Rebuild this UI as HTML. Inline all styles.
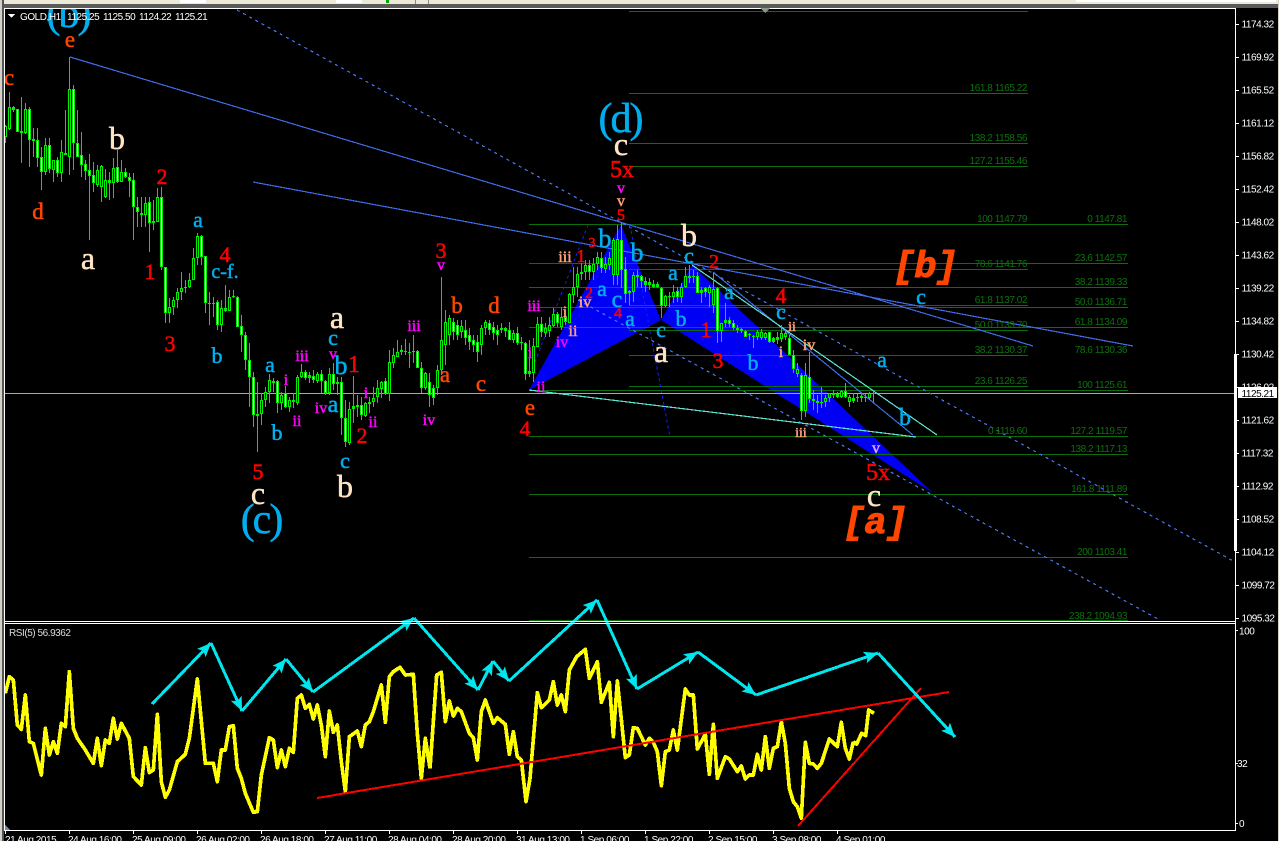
<!DOCTYPE html>
<html><head><meta charset="utf-8"><title>GOLD,H1</title>
<style>
html,body{margin:0;padding:0;background:#000;width:1279px;height:841px;overflow:hidden}
svg{display:block}
.ax{font:10px "Liberation Sans",sans-serif;letter-spacing:-.45px;fill:#fff}
.fb{font:10px "Liberation Sans",sans-serif;letter-spacing:-.45px;fill:#0c720c;text-anchor:end}
.w text{font-family:"Liberation Serif",serif;text-anchor:middle;stroke-width:.5px}
.big{fill:#00aeef;stroke:#00aeef;font-size:42px;letter-spacing:-2px}
.bq{fill:#ffe4c4;stroke:#ffe4c4;font-size:32px}
.rd{fill:#f00;stroke:#f00;font-size:22px}
.bl{fill:#00aeef;stroke:#00aeef;font-size:22px}
.or{fill:#ff4500;stroke:#ff4500;font-size:23px}
.mg{fill:#f0f;stroke:#f0f;font-size:16px}
.sl{fill:#ffa07a;stroke:#ffa07a;font-size:16px}
.br{font:italic bold 37px "Liberation Mono",monospace;fill:#ff4500;stroke:#ff4500;stroke-width:1px;letter-spacing:-1px;text-anchor:middle}
</style></head><body>
<svg xmlns="http://www.w3.org/2000/svg" width="1279" height="841" viewBox="0 0 1279 841">
<defs>
<marker id="ar" markerWidth="16" markerHeight="12" refX="14" refY="6" orient="auto" markerUnits="userSpaceOnUse"><path d="M14 6L0 0L3 6L0 12Z" fill="#00e6ee"/></marker>
</defs>
<rect width="1279" height="841" fill="#000"/>

<!-- pattern -->
<path d="M529 390L621 225L661 320Z" fill="#0000f5"/>
<path d="M661 320L692 265L933 493Z" fill="#0000f5"/>

<g shape-rendering="crispEdges" fill="none">
<path stroke="#0a6e0a" d="M629 11.5H1028M629 93.5H1028M629 143.5H1028M629 166.5H1028M529 224.5H1128M629 269.5H1028M629 305.5H1028M629 330.5H1028M629 355.5H1028M629 386.5H1028M529 436.5H1128M529 263.5H1128M529 287.5H1128M529 307.5H1128M529 327.5H1128M529 390.5H1128M529 454.5H1128M529 494.5H1128M529 557.5H1128M529 620.5H1128"/>
<path stroke="#a8a8a8" d="M5 393.5H1235"/>
<path stroke="#3f6be8" stroke-width="1.2" d="M70 57L1033 346M253 182L1133 346M713 272L913 435"/>
<path stroke="#4a76f5" stroke-width="1.2" stroke-dasharray="3 4" d="M237 10L1235 562M578 300L1158 619"/>
<path stroke="#1a1aff" stroke-dasharray="3 3" d="M588 225L533 367M630 225L670 437"/>
<path stroke="#5fe0d0" stroke-width="1.2" d="M529 390L916 437M692 265L937 435"/>
</g>

<!-- candles -->
<g shape-rendering="crispEdges" fill="none">
<path stroke="#00e600" stroke-width="1" d="M5.5 125V143M9.5 92V130M13.5 106V112M17.5 109V132M21.5 97V163M25.5 103V134M29.5 107V167M33.5 128V157M37.5 128V167M41.5 147V190M45.5 138V175M49.5 138V173M53.5 160V182M57.5 157V177M61.5 140V182M65.5 110V155M69.5 57V175M73.5 85V170M77.5 110V157M81.5 132V177M85.5 160V180M89.5 154V240M93.5 162V192M97.5 165V187M101.5 165V202M105.5 169V198M109.5 172V200M113.5 158V198M117.5 150V183M121.5 160V180M125.5 168V178M129.5 173V197M133.5 173V240M137.5 197V227M141.5 197V227M145.5 197V227M149.5 197V252M153.5 200V230M157.5 188V222M161.5 187V270M165.5 267V323M169.5 298V323M173.5 297V315M177.5 288V308M181.5 272V300M185.5 280V293M189.5 273V288M193.5 248V280M197.5 233V265M201.5 235V265M205.5 256V313M209.5 292V325M213.5 297V317M217.5 300V330M221.5 300V332M225.5 285V312M229.5 290V311M233.5 290V298M237.5 296V327M241.5 315V352M245.5 332V370M249.5 343V407M253.5 372V427M257.5 382V452M261.5 393V425M265.5 387V407M269.5 374V403M273.5 378V392M277.5 380V413M281.5 392V410M285.5 386V408M289.5 397V412M293.5 393V408M297.5 375V405M301.5 364V378M305.5 370V380M309.5 372V383M313.5 370V383M317.5 372V383M321.5 370V393M325.5 380V395M329.5 368V395M333.5 363V390M337.5 377V395M341.5 377V435M345.5 400V447M349.5 402V445M353.5 376V423M357.5 395V417M361.5 397V420M365.5 402V417M369.5 397V413M373.5 387V407M377.5 380V403M381.5 381V398M385.5 378V395M389.5 350V401M393.5 348V368M397.5 340V357M401.5 345V355M405.5 339V355M409.5 343V368M413.5 335V363M417.5 350V368M421.5 362V393M425.5 372V390M429.5 373V407M433.5 385V405M437.5 365V395M441.5 277V375M445.5 310V365M449.5 315V345M453.5 318V340M457.5 320V340M461.5 320V338M465.5 320V345M469.5 328V350M473.5 335V352M477.5 335V362M481.5 325V355M485.5 320V335M489.5 320V335M493.5 322V340M497.5 325V345M501.5 323V333M505.5 327V337M509.5 322V340M513.5 330V343M517.5 327V345M521.5 337V350M525.5 342V380M529.5 340V377M533.5 338V382M537.5 317V347M541.5 317V337M545.5 323V337M549.5 317V337M553.5 308V327M557.5 312V327M561.5 307V330M565.5 315V325M569.5 293V323M573.5 267V303M577.5 267V297M581.5 263V280M585.5 260V280M589.5 260V280M593.5 258V280M597.5 252V270M601.5 252V273M605.5 257V273M609.5 252V270M613.5 238V285M617.5 225V285M621.5 223V288M625.5 257V303M629.5 290V305M633.5 272V302M637.5 270V287M641.5 275V288M645.5 277V292M649.5 278V290M653.5 280V288M657.5 282V288M661.5 287V318M665.5 295V307M669.5 292V307M673.5 285V303M677.5 287V302M681.5 283V303M685.5 267V288M689.5 265V283M693.5 270V283M697.5 272V293M701.5 287V303M705.5 287V297M709.5 285V307M713.5 273V313M717.5 287V343M721.5 323V342M725.5 303V327M729.5 317V327M733.5 320V330M737.5 325V333M741.5 328V333M745.5 330V337M749.5 333V340M753.5 335V348M757.5 330V340M761.5 329V340M765.5 332V340M769.5 332V343M773.5 337V343M777.5 332V344M781.5 325V342M785.5 330V340M789.5 335V355M793.5 350V373M797.5 363V377M801.5 373V420M805.5 363V417M809.5 352V403M813.5 390V410M817.5 395V413M821.5 387V408M825.5 395V407M829.5 393V402M833.5 390V398M837.5 392V398M841.5 390V398M845.5 383V398M849.5 395V407M853.5 393V403M857.5 394V402M861.5 393V402M865.5 394V402M869.5 392V400M873.5 392V402"/>
<path stroke="#00f000" stroke-width="3" d="M13.5 107V110M21.5 131V133M33.5 139V141M65.5 153V155M109.5 180V183M141.5 213V215M153.5 221V223M185.5 287V288M209.5 303V304M213.5 303V304M225.5 308V311M233.5 296V297M257.5 414V416M273.5 381V383M293.5 400V402M337.5 382V384M353.5 406V409M357.5 405V407M369.5 402V404M401.5 350V352M405.5 351V352M409.5 352V353M413.5 351V352M505.5 328V331M521.5 342V343M529.5 371V374M581.5 272V274M629.5 291V293M637.5 275V277M645.5 281V285M649.5 282V285M653.5 284V287M657.5 284V287M669.5 296V297M689.5 276V278M693.5 276V277M725.5 320V323M737.5 328V330M741.5 329V331M749.5 334V335M753.5 336V337M777.5 337V340M813.5 399V401M817.5 401V403M821.5 402V403M833.5 393V395M837.5 394V397M853.5 398V401M857.5 397V398M861.5 396V398M865.5 397V398M873.5 393V394"/>
<path stroke="#00f000" stroke-width="3" d="M17.5 109V132M29.5 109V140M37.5 140V158M41.5 157V172M49.5 145V169M57.5 160V173M73.5 89V143M77.5 143V157M81.5 155V165M85.5 164V171M89.5 170V176M93.5 175V183M117.5 167V182M125.5 172V177M129.5 177V181M133.5 180V207M137.5 207V212M149.5 202V223M161.5 197V267M165.5 267V313M201.5 236V257M205.5 256V303M217.5 302V325M237.5 297V327M241.5 326V335M245.5 335V360M249.5 360V377M253.5 377V415M277.5 381V403M285.5 393V407M305.5 372V378M313.5 376V380M321.5 374V381M325.5 381V393M333.5 374V384M341.5 382V418M345.5 418V442M361.5 405V415M385.5 381V394M417.5 351V368M421.5 368V388M429.5 382V395M433.5 388V398M453.5 322V332M457.5 325V335M465.5 330V338M469.5 335V342M473.5 340V345M477.5 342V352M489.5 323V330M493.5 327V333M497.5 330V335M501.5 328V330M509.5 330V340M517.5 333V343M525.5 343V374M541.5 324V332M557.5 314V323M565.5 317V322M589.5 265V272M601.5 258V268M621.5 240V270M625.5 269V294M641.5 276V281M661.5 288V306M677.5 291V297M697.5 276V293M705.5 288V292M717.5 288V331M729.5 320V324M733.5 323V328M745.5 331V337M769.5 332V342M789.5 338V355M793.5 355V369M801.5 375V411M809.5 377V399M845.5 391V397"/>
<path stroke="#fff" stroke-width="1" d="M17.5 110V131M29.5 110V139M37.5 141V157M41.5 158V171M49.5 146V168M57.5 161V172M73.5 90V142M77.5 144V156M81.5 156V164M85.5 165V170M89.5 171V175M93.5 176V182M117.5 168V181M125.5 173V176M129.5 178V180M133.5 181V206M137.5 208V211M149.5 203V222M161.5 198V266M165.5 268V312M201.5 237V256M205.5 257V302M217.5 303V324M237.5 298V326M241.5 327V334M245.5 336V359M249.5 361V376M253.5 378V414M277.5 382V402M285.5 394V406M305.5 373V377M313.5 377V379M321.5 375V380M325.5 382V392M333.5 375V383M341.5 383V417M345.5 419V441M361.5 406V414M385.5 382V393M417.5 352V367M421.5 369V387M429.5 383V394M433.5 389V397M453.5 323V331M457.5 326V334M465.5 331V337M469.5 336V341M473.5 341V344M477.5 343V351M489.5 324V329M493.5 328V332M497.5 331V334M509.5 331V339M517.5 334V342M525.5 344V373M541.5 325V331M557.5 315V322M565.5 318V321M589.5 266V271M601.5 259V267M621.5 241V269M625.5 270V293M641.5 277V280M661.5 289V305M677.5 292V296M697.5 277V292M705.5 289V291M717.5 289V330M729.5 321V323M733.5 324V327M745.5 332V336M769.5 333V341M789.5 339V354M793.5 356V368M801.5 376V410M809.5 378V398M845.5 392V396"/>
<path stroke="#00f000" stroke-width="3" d="M5.5 126V137M9.5 107V129M25.5 109V133M45.5 145V172M53.5 160V170M61.5 152V173M69.5 89V157M97.5 170V185M101.5 166V187M105.5 180V197M113.5 168V183M121.5 172V182M145.5 203V215M157.5 197V222M169.5 307V313M173.5 300V307M177.5 292V300M181.5 288V292M189.5 280V287M193.5 258V280M197.5 236V258M221.5 308V325M229.5 297V311M261.5 400V414M265.5 392V400M269.5 380V392M281.5 395V403M289.5 400V407M297.5 377V403M301.5 372V377M309.5 375V378M317.5 374V381M329.5 374V393M349.5 409V443M365.5 403V416M373.5 398V402M377.5 388V397M381.5 382V389M389.5 362V394M393.5 355V363M397.5 352V357M425.5 373V388M437.5 370V388M441.5 340V370M445.5 322V345M449.5 318V335M461.5 326V332M481.5 328V345M485.5 322V328M513.5 333V340M533.5 346V373M537.5 324V347M545.5 328V333M549.5 325V331M553.5 314V326M561.5 317V327M569.5 294V323M573.5 287V295M577.5 274V287M585.5 265V272M593.5 264V272M597.5 257V264M605.5 264V269M609.5 258V265M613.5 240V275M617.5 239V275M633.5 275V292M665.5 296V306M673.5 292V297M681.5 287V297M685.5 276V287M701.5 290V293M709.5 287V293M713.5 289V305M721.5 323V331M757.5 332V337M761.5 332V338M765.5 333V338M773.5 338V342M781.5 333V339M785.5 333V337M797.5 369V374M805.5 375V411M825.5 398V402M829.5 393V398M841.5 391V397M849.5 397V402M869.5 393V398"/>
<path stroke="#000" stroke-width="1" d="M5.5 127V136M9.5 108V128M25.5 110V132M45.5 146V171M53.5 161V169M61.5 153V172M69.5 90V156M97.5 171V184M101.5 167V186M105.5 181V196M113.5 169V182M121.5 173V181M145.5 204V214M157.5 198V221M169.5 308V312M173.5 301V306M177.5 293V299M181.5 289V291M189.5 281V286M193.5 259V279M197.5 237V257M221.5 309V324M229.5 298V310M261.5 401V413M265.5 393V399M269.5 381V391M281.5 396V402M289.5 401V406M297.5 378V402M301.5 373V376M317.5 375V380M329.5 375V392M349.5 410V442M365.5 404V415M373.5 399V401M377.5 389V396M381.5 383V388M389.5 363V393M393.5 356V362M397.5 353V356M425.5 374V387M437.5 371V387M441.5 341V369M445.5 323V344M449.5 319V334M461.5 327V331M481.5 329V344M485.5 323V327M513.5 334V339M533.5 347V372M537.5 325V346M545.5 329V332M549.5 326V330M553.5 315V325M561.5 318V326M569.5 295V322M573.5 288V294M577.5 275V286M585.5 266V271M593.5 265V271M597.5 258V263M605.5 265V268M609.5 259V264M613.5 241V274M617.5 240V274M633.5 276V291M665.5 297V305M673.5 293V296M681.5 288V296M685.5 277V286M709.5 288V292M713.5 290V304M721.5 324V330M757.5 333V336M761.5 333V337M765.5 334V337M781.5 334V338M785.5 334V336M797.5 370V373M805.5 376V410M825.5 399V401M829.5 394V397M841.5 392V396M849.5 398V401M869.5 394V397"/>
</g>

<!-- fib labels -->
<g>
<text class="fb" x="1027" y="9">200 1175.98</text>
<text class="fb" x="1027" y="91">161.8 1165.22</text>
<text class="fb" x="1027" y="141">138.2 1158.56</text>
<text class="fb" x="1027" y="164">127.2 1155.46</text>
<text class="fb" x="1027" y="222">100 1147.79</text>
<text class="fb" x="1027" y="267">78.6 1141.76</text>
<text class="fb" x="1027" y="303">61.8 1137.02</text>
<text class="fb" x="1027" y="328">50.0 1133.70</text>
<text class="fb" x="1027" y="353">38.2 1130.37</text>
<text class="fb" x="1027" y="384">23.6 1126.25</text>
<text class="fb" x="1027" y="434">0 1119.60</text>
<text class="fb" x="1127" y="222">0 1147.81</text>
<text class="fb" x="1127" y="261">23.6 1142.57</text>
<text class="fb" x="1127" y="285">38.2 1139.33</text>
<text class="fb" x="1127" y="305">50.0 1136.71</text>
<text class="fb" x="1127" y="325">61.8 1134.09</text>
<text class="fb" x="1127" y="353">78.6 1130.36</text>
<text class="fb" x="1127" y="388">100 1125.61</text>
<text class="fb" x="1127" y="434">127.2 1119.57</text>
<text class="fb" x="1127" y="452">138.2 1117.13</text>
<text class="fb" x="1127" y="492">161.8 1111.89</text>
<text class="fb" x="1127" y="555">200 1103.41</text>
<text class="fb" x="1127" y="619">238.2 1094.93</text>
</g>

<!-- wave labels -->
<g class="w">
<text class="big" x="68" y="27">(b)</text>
<text class="big" x="261" y="533">(c)</text>
<text class="big" x="620" y="132">(d)</text>

<text class="bq" x="117" y="149">b</text>
<text class="bq" x="88" y="269">a</text>
<text class="bq" x="337" y="328">a</text>
<text class="bq" x="345" y="497">b</text>
<text class="bq" x="258" y="504">c</text>
<text class="bq" x="621" y="155">c</text>
<text class="bq" x="689" y="246">b</text>
<text class="bq" x="661" y="362">a</text>
<text class="bq" x="874" y="506">c</text>

<text class="rd" x="162" y="184">2</text>
<text class="rd" x="150" y="279">1</text>
<text class="rd" x="170" y="351">3</text>
<text class="rd" x="225" y="262">4</text>
<text class="rd" x="258" y="479">5</text>
<text class="rd" x="354" y="372" style="font-size:24px">1</text>
<text class="rd" x="362" y="443">2</text>
<text class="rd" x="441" y="258">3</text>
<text class="rd" x="525" y="436">4</text>
<text class="rd" x="622" y="177" style="font-size:24px">5x</text>
<text class="rd" x="621" y="220" style="font-size:16px">5</text>
<text class="rd" x="592" y="247" style="font-size:14px">3</text>
<text class="rd" x="581" y="262" style="font-size:18px">1</text>
<text class="rd" x="589" y="298" style="font-size:16px">2</text>
<text class="rd" x="618" y="318" style="font-size:16px">4</text>
<text class="rd" x="714" y="268" style="font-size:20px">2</text>
<text class="rd" x="706" y="337">1</text>
<text class="rd" x="718" y="368">3</text>
<text class="rd" x="781" y="303">4</text>
<text class="rd" x="878" y="480" style="font-size:24px">5x</text>

<text class="bl" x="198" y="227">a</text>
<text class="bl" x="225" y="278" style="font-size:20px">c-f.</text>
<text class="bl" x="217" y="363">b</text>
<text class="bl" x="270" y="372">a</text>
<text class="bl" x="277" y="440">b</text>
<text class="bl" x="333" y="345">c</text>
<text class="bl" x="341" y="374" style="font-size:26px">b</text>
<text class="bl" x="333" y="412" style="font-size:24px">a</text>
<text class="bl" x="345" y="468">c</text>
<text class="bl" x="605" y="247" style="font-size:26px">b</text>
<text class="bl" x="637" y="261" style="font-size:26px">b</text>
<text class="bl" x="602" y="296">a</text>
<text class="bl" x="617" y="307" style="font-size:24px">c</text>
<text class="bl" x="630" y="326">a</text>
<text class="bl" x="661" y="337">c</text>
<text class="bl" x="673" y="280">a</text>
<text class="bl" x="689" y="263">c</text>
<text class="bl" x="681" y="326">b</text>
<text class="bl" x="729" y="299">a</text>
<text class="bl" x="753" y="370">b</text>
<text class="bl" x="781" y="319">c</text>
<text class="bl" x="882" y="367">a</text>
<text class="bl" x="921" y="304">c</text>
<text class="bl" x="905" y="425" style="font-size:24px">b</text>

<text class="or" x="9" y="85">c</text>
<text class="or" x="70" y="47">e</text>
<text class="or" x="38" y="219">d</text>
<text class="or" x="457" y="313">b</text>
<text class="or" x="494" y="313">d</text>
<text class="or" x="445" y="382">a</text>
<text class="or" x="481" y="391">c</text>
<text class="or" x="530" y="415">e</text>

<text class="mg" x="286" y="385">i</text>
<text class="mg" x="302" y="361">iii</text>
<text class="mg" x="297" y="426">ii</text>
<text class="mg" x="321" y="413">iv</text>
<text class="mg" x="333" y="359">v</text>
<text class="mg" x="366" y="398">i</text>
<text class="mg" x="373" y="427">ii</text>
<text class="mg" x="414" y="331">iii</text>
<text class="mg" x="429" y="425">iv</text>
<text class="mg" x="441" y="270">v</text>
<text class="mg" x="534" y="311">iii</text>
<text class="mg" x="530" y="358">i</text>
<text class="mg" x="562" y="347">iv</text>
<text class="mg" x="541" y="392">ii</text>
<text class="mg" x="621" y="193">v</text>

<text class="sl" x="565" y="262">iii</text>
<text class="sl" x="565" y="317">i</text>
<text class="sl" x="573" y="336">ii</text>
<text class="sl" x="585" y="307">iv</text>
<text class="sl" x="621" y="206">v</text>
<text class="sl" x="792" y="331" style="font-size:14px">ii</text>
<text class="sl" x="809" y="350">iv</text>
<text class="sl" x="781" y="357">i</text>
<text class="sl" x="801" y="437" style="font-size:14px">iii</text>
<text class="sl" x="876" y="453" style="fill:#e8a0ff;stroke:#e8a0ff">v</text>
</g>
<text class="br" x="925" y="277">[b]</text>
<text class="br" x="875" y="533">[a]</text>

<!-- RSI -->
<g fill="none" stroke-linejoin="round" shape-rendering="crispEdges">
<polyline transform="translate(0,615) scale(.33333)" stroke="#ff0" stroke-width="11" points="16,235 28,185 40,195 52,330 64,343 76,240 88,380 100,385 124,480 136,340 148,420 160,380 172,415 184,325 196,335 208,170 220,340 232,370 256,405 280,445 292,370 304,452 316,375 328,385 340,310 352,372 364,325 388,370 400,485 424,510 436,398 448,473 460,465 472,298 484,500 496,547 508,525 532,440 556,418 568,370 592,192 616,445 640,445 652,500 664,405 676,405 688,335 700,332 712,460 724,490 736,535 760,592 772,590 784,480 808,368 820,375 832,458 844,405 856,455 868,400 880,412 892,250 904,240 916,280 928,268 940,312 952,270 964,330 976,425 988,288 1000,352 1012,330 1024,440 1036,530 1048,365 1072,348 1084,395 1096,330 1108,320 1120,290 1144,210 1156,322 1168,185 1180,170 1200,157 1216,180 1240,178 1252,355 1264,490 1276,370 1290,460"/>
<polyline transform="translate(430,615) scale(.33333)" stroke="#ff0" stroke-width="11" points="0,460 20,180 34,172 46,320 58,258 70,303 82,280 94,290 118,355 130,368 142,435 154,290 166,255 190,325 202,308 226,328 238,418 250,350 262,425 274,435 288,560 300,490 322,233 334,278 358,255 370,200 382,270 394,240 406,290 418,165 440,125 466,103 478,190 502,140 514,262 538,202 550,365 562,198 586,428 598,420 610,338 622,340 646,390 658,370 670,382 682,410 694,512 706,410 718,405 730,345 742,405 766,222 778,240 790,240 802,402 826,358 838,478 850,328 862,490 886,425 898,432 922,470 934,453 946,492 958,480 970,480 982,418 994,465 1006,365 1018,460 1030,400 1042,395 1054,320 1066,385 1078,520 1090,560 1102,575 1114,610 1126,382 1138,445 1150,447 1162,460 1174,445 1198,372 1222,395 1234,322 1246,400 1258,432 1270,380"/>
<polyline transform="translate(850,615) scale(.33333)" stroke="#ff0" stroke-width="11" points="10,380 20,387 35,355 47,362 56,285 72,295"/>
<path stroke="#f00" stroke-width="2" d="M317 798L949 692M798 826L921 688"/>
<g stroke="#00e6ee" stroke-width="3">
<line x1="152" y1="704" x2="211" y2="643" marker-end="url(#ar)"/>
<line x1="211" y1="643" x2="242" y2="711" marker-end="url(#ar)"/>
<line x1="242" y1="711" x2="286" y2="659" marker-end="url(#ar)"/>
<line x1="286" y1="659" x2="313" y2="692" marker-end="url(#ar)"/>
<line x1="313" y1="692" x2="414" y2="618" marker-end="url(#ar)"/>
<line x1="414" y1="618" x2="478" y2="690" marker-end="url(#ar)"/>
<line x1="478" y1="690" x2="493" y2="661" marker-end="url(#ar)"/>
<line x1="493" y1="661" x2="509" y2="681" marker-end="url(#ar)"/>
<line x1="509" y1="681" x2="597" y2="600" marker-end="url(#ar)"/>
<line x1="597" y1="600" x2="637" y2="689" marker-end="url(#ar)"/>
<line x1="637" y1="689" x2="698" y2="652" marker-end="url(#ar)"/>
<line x1="698" y1="652" x2="756" y2="695" marker-end="url(#ar)"/>
<line x1="756" y1="695" x2="878" y2="653" marker-end="url(#ar)"/>
<line x1="878" y1="653" x2="955" y2="737" marker-end="url(#ar)"/>
</g>
</g>

<!-- frame and chrome -->
<g shape-rendering="crispEdges">
<rect x="0" y="0" width="1279" height="4" fill="#ece9d8"/>
<rect x="0" y="4" width="1279" height="4" fill="#5a5a5a"/>
<rect x="0" y="0" width="2" height="841" fill="#d4d0c8"/>
<rect x="2" y="0" width="2" height="841" fill="#555"/>
<rect x="1278" y="0" width="1" height="841" fill="#d4d0c8"/>
<rect x="415" y="0" width="1" height="4" fill="#888"/><rect x="428" y="0" width="1" height="4" fill="#888"/>
<rect x="180" y="0" width="26" height="3" fill="#fff"/><rect x="336" y="0" width="26" height="3" fill="#fff"/><rect x="386" y="0" width="3" height="3" fill="#0a0"/>
<rect x="1076" y="0" width="200" height="2" fill="#fff"/>
<rect x="4" y="8" width="1232" height="1" fill="#fff"/>
<rect x="4" y="621" width="1232" height="1" fill="#fff"/>
<rect x="4" y="623" width="1232" height="1" fill="#fff"/>
<rect x="4" y="830" width="1232" height="1" fill="#fff"/>
<rect x="4" y="8" width="1" height="823" fill="#fff"/>
<rect x="1235" y="8" width="1" height="823" fill="#fff"/>
<rect x="1234" y="354" width="3" height="197" fill="#fff"/>
<path stroke="#fff" d="M1236 24.5h3M1236 57.5h3M1236 90.5h3M1236 123.5h3M1236 156.5h3M1236 189.5h3M1236 222.5h3M1236 255.5h3M1236 288.5h3M1236 321.5h3M1236 354.5h3M1236 387.5h3M1236 420.5h3M1236 453.5h3M1236 486.5h3M1236 519.5h3M1236 552.5h3M1236 585.5h3M1236 618.5h3M1236 630.5h2M1236 763.5h2M1236 823.5h2M5.5 831v3M69.5 831v3M133.5 831v3M197.5 831v3M261.5 831v3M325.5 831v3M389.5 831v3M453.5 831v3M517.5 831v3M581.5 831v3M645.5 831v3M709.5 831v3M773.5 831v3M837.5 831v3"/>
<path d="M8 14h7l-3.500 4z" fill="#fff"/>
<path d="M760 8h10l-5 5z" fill="#8a9a8a"/>
<path d="M5 825l5 5h-5z" fill="#7a8aa0"/>
</g>

<text class="ax" x="20" y="20">GOLD,H1</text>
<text class="ax" x="67" y="20">1125.25</text>
<text class="ax" x="103" y="20">1125.50</text>
<text class="ax" x="139" y="20">1124.22</text>
<text class="ax" x="175" y="20">1125.21</text>
<text class="ax" x="9" y="636" style="fill:#ddd">RSI(5) 56.9362</text>

<g>
<text class="ax" x="1241.500" y="27.500">1174.32</text>
<text class="ax" x="1241.500" y="60.500">1169.92</text>
<text class="ax" x="1241.500" y="93.500">1165.52</text>
<text class="ax" x="1241.500" y="126.500">1161.12</text>
<text class="ax" x="1241.500" y="159.500">1156.82</text>
<text class="ax" x="1241.500" y="192.500">1152.42</text>
<text class="ax" x="1241.500" y="225.500">1148.02</text>
<text class="ax" x="1241.500" y="258.500">1143.62</text>
<text class="ax" x="1241.500" y="291.500">1139.22</text>
<text class="ax" x="1241.500" y="324.500">1134.82</text>
<text class="ax" x="1241.500" y="357.500">1130.42</text>
<text class="ax" x="1241.500" y="390.500">1126.02</text>
<text class="ax" x="1241.500" y="423.500">1121.62</text>
<text class="ax" x="1241.500" y="456.500">1117.32</text>
<text class="ax" x="1241.500" y="489.500">1112.92</text>
<text class="ax" x="1241.500" y="522.500">1108.52</text>
<text class="ax" x="1241.500" y="555.500">1104.12</text>
<text class="ax" x="1241.500" y="588.500">1099.72</text>
<text class="ax" x="1241.500" y="621.500">1095.32</text>
<rect x="1238" y="387" width="39" height="11" fill="#fff"/>
<text class="ax" x="1241.500" y="397" style="fill:#000">1125.21</text>
<text class="ax" x="1239" y="634.500">100</text>
<text class="ax" x="1237" y="767">32</text>
<text class="ax" x="1239" y="827">0</text>
</g>
<g>
<text class="ax" x="5" y="843">21 Aug 2015</text>
<text class="ax" x="68" y="843">24 Aug 16:00</text>
<text class="ax" x="132" y="843">25 Aug 09:00</text>
<text class="ax" x="196" y="843">26 Aug 02:00</text>
<text class="ax" x="260" y="843">26 Aug 18:00</text>
<text class="ax" x="324" y="843">27 Aug 11:00</text>
<text class="ax" x="388" y="843">28 Aug 04:00</text>
<text class="ax" x="452" y="843">28 Aug 20:00</text>
<text class="ax" x="516" y="843">31 Aug 13:00</text>
<text class="ax" x="580" y="843">1 Sep 06:00</text>
<text class="ax" x="644" y="843">1 Sep 22:00</text>
<text class="ax" x="708" y="843">2 Sep 15:00</text>
<text class="ax" x="772" y="843">3 Sep 08:00</text>
<text class="ax" x="836" y="843">4 Sep 01:00</text>
</g>
</svg>
</body></html>
